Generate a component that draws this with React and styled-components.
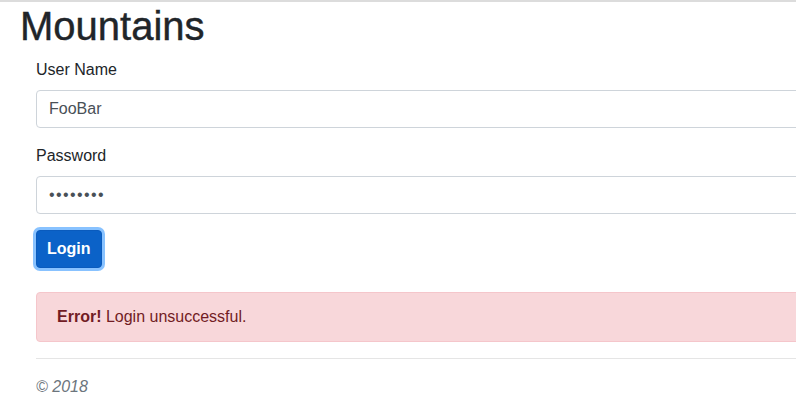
import React from "react";
import styled, { createGlobalStyle } from "styled-components";

const GlobalStyle = createGlobalStyle`
  html, body {
    margin: 0;
    padding: 0;
    background: #fff;
    overflow: hidden;
  }
  body {
    font-family: "Liberation Sans", Arial, sans-serif;
    font-size: 16px;
    line-height: 1.5;
    color: #212529;
  }
  * {
    box-sizing: border-box;
  }
`;

export default function App() {
  return (
    <>
      <GlobalStyle />
      <TopRule />
      <Page>
        <Title>Mountains</Title>
        <Body>
          <form onSubmit={(e) => e.preventDefault()}>
            <Group>
              <Label htmlFor="user">User Name</Label>
              <Input id="user" type="text" defaultValue="FooBar" />
            </Group>
            <Group>
              <Label htmlFor="pass">Password</Label>
              <Input id="pass" type="password" defaultValue="12345678" />
            </Group>
            <Button type="submit">Login</Button>
          </form>
          <Alert>
            <strong>Error!</strong> Login unsuccessful.
          </Alert>
          <Rule />
          <Footer>© 2018</Footer>
        </Body>
      </Page>
    </>
  );
}

const TopRule = styled.div`
  height: 2px;
  background: #dcdcdc;
`;

// wider than the window on purpose: the fields run past the right edge
const Page = styled.main`
  width: 1140px;
  padding-left: 18px;
`;

const Title = styled.h1`
  margin: 0 0 8px;
  padding-left: 2px;
  font-size: 40px;
  font-weight: 500;
  line-height: 1.2;
  color: #212529;
  -webkit-text-stroke: 0.4px #212529;
`;

const Body = styled.div`
  padding-left: 18px;
`;

const Group = styled.div`
  margin-bottom: 16px;
`;

const Label = styled.label`
  display: inline-block;
  margin-bottom: 8px;
`;

const Input = styled.input`
  display: block;
  width: 100%;
  height: 38px;
  padding: 6px 12px;
  font-family: inherit;
  font-size: 16px;
  line-height: 1.5;
  color: #495057;
  background: #fff;
  border: 1px solid #ced4da;
  border-radius: 4px;
  outline: none;

  &[type="password"] {
    letter-spacing: 1.4px;
  }
`;

const Button = styled.button`
  display: inline-block;
  height: 38px;
  padding: 6px 10px;
  font-family: inherit;
  font-size: 16px;
  font-weight: 700;
  line-height: 1.5;
  color: #fff;
  background: #0b62c8;
  border: 1px solid #0a5bbd;
  border-radius: 4px;
  box-shadow: 0 0 0 3px rgba(38, 143, 255, 0.55);
  cursor: pointer;
`;

const Alert = styled.div`
  margin-top: 24px;
  padding: 12px 20px;
  color: #721c24;
  background: #f8d7da;
  border: 1px solid #f5c6cb;
  border-radius: 4px;
`;

const Rule = styled.hr`
  margin: 16px 0;
  border: 0;
  border-top: 1px solid rgba(0, 0, 0, 0.1);
`;

const Footer = styled.p`
  margin: 0;
  font-style: italic;
  color: #6c757d;
`;
